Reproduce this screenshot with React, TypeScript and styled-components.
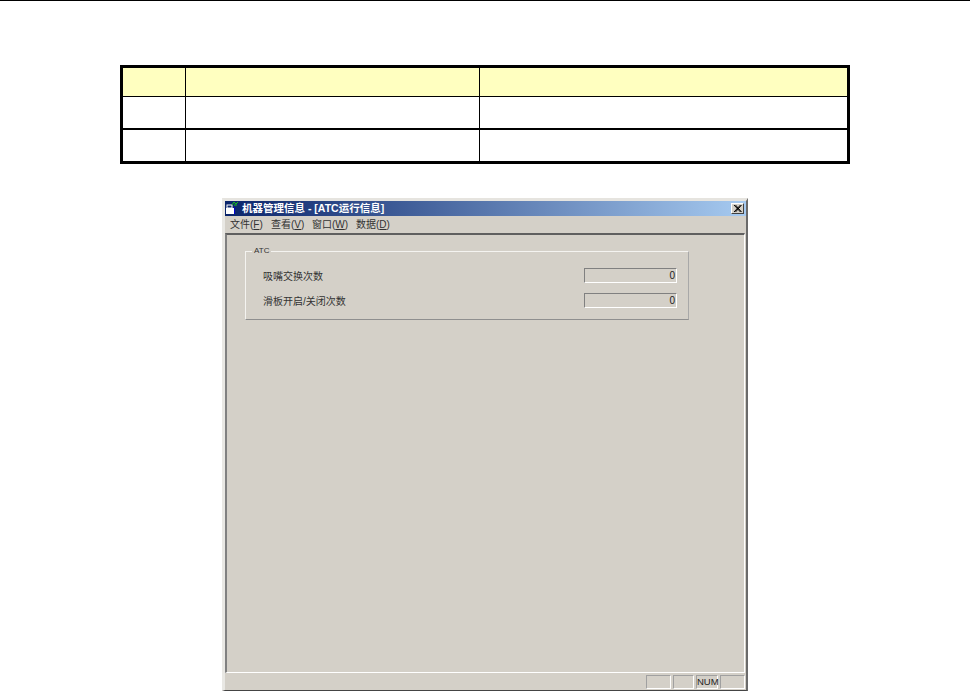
import React, { FunctionComponent } from "react";
import styled, { createGlobalStyle } from "styled-components";

const GlobalStyle = createGlobalStyle`
  html, body {
    margin: 0;
    padding: 0;
    background: #fff;
  }
  body {
    font-family: "Liberation Sans", "Noto Sans CJK SC", sans-serif;
  }
`;

const Page = styled.div`
  width: 970px;
  height: 691px;
  overflow: hidden;
  box-sizing: border-box;
  border-top: 1px solid #000;
`;
const SpecTable = styled.div`
  width: 730px;
  height: 99px;
  box-sizing: border-box;
  margin: 64px 0 0 120px;
  border: 3px solid #000;
  display: flex;
  flex-direction: column;
`;
const SpecRow = styled.div<{ $head?: boolean; $height: number; $thick?: boolean }>`
  display: grid;
  grid-template-columns: 62px 1px 293px 1px 1fr;
  height: ${(p) => p.$height}px;
  flex: none;
  box-sizing: border-box;
  background: ${(p) => (p.$head ? "#ffffc0" : "#fff")};
  border-bottom: ${(p) => (p.$thick ? "2px solid #000" : "0")};
`;
const SpecRule = styled.div`
  background: #000;
`;
const HeadRule = styled.div`
  height: 1px;
  background: #000;
  flex: none;
`;
const WindowWrap = styled.div`
  margin: 34px 0 0 222px;
  width: 526px;
  height: 493px;
  box-sizing: border-box;
  background: #d4d0c8;
  border-top: 3px solid #e6e4df;
  border-left: 3px solid #e9e8e4;
  border-right: 2px solid #6a6a6a;
  border-bottom: 1px solid #444;
  display: flex;
  flex-direction: column;
`;
const TitleBar = styled.div`
  height: 15px;
  flex: none;
  display: flex;
  align-items: center;
  background: linear-gradient(to right, #0a246a, #a6caf0);
  padding: 0 1px;
`;
const TitleText = styled.span`
  margin: -2px 0 0 3px;
  color: #fff;
  font-size: 10.5px;
  font-weight: bold;
  white-space: nowrap;
  flex: 1;
`;
const CloseButton = styled.div`
  width: 13px;
  height: 11px;
  box-sizing: border-box;
  margin-right: 1px;
  background: #d4d0c8;
  border: 1px solid;
  border-color: #fff #404040 #404040 #fff;
  display: flex;
  align-items: center;
  justify-content: center;
`;
const MenuBar = styled.div`
  height: 17px;
  flex: none;
  display: flex;
  align-items: center;
  padding-bottom: 2px;
  box-sizing: border-box;
  font-size: 10px;
  color: #333;
`;
const MenuItem = styled.span<{ $width: number }>`
  width: ${(p) => p.$width}px;
  flex: none;
  white-space: nowrap;
  u {
    text-decoration: underline;
  }
  &:first-child {
    margin-left: 5px;
  }
`;
const Client = styled.div`
  flex: 1;
  box-sizing: border-box;
  border-top: 2px solid #5f5f5f;
  border-left: 2px solid #808080;
  border-right: 1px solid #fff;
  border-bottom: 1px solid #fff;
  padding: 12px 0 0 18px;
  margin-right: 1px;
`;
const GroupBox = styled.fieldset`
  width: 444px;
  height: 73px;
  box-sizing: border-box;
  margin: 0;
  padding: 0 11px 0 17px;
  border: 1px solid;
  border-color: #f4f3f0 #a8a8a8 #8f8f8f #f4f3f0;
  display: block;
`;
const GroupLegend = styled.legend`
  margin-left: -11px;
  padding: 0 2px;
  font-size: 8px;
  line-height: 8px;
  color: #333;
`;
const FieldRow = styled.div`
  display: flex;
  align-items: center;
  justify-content: space-between;
  height: 15px;
  margin-top: 10px;
  &:first-of-type {
    margin-top: 13px;
  }
`;
const FieldLabel = styled.span`
  font-size: 10px;
  color: #333;
`;
const FieldValue = styled.div`
  width: 93px;
  height: 15px;
  box-sizing: border-box;
  border: 1px solid;
  border-color: #808080 #fff #fff #808080;
  font-size: 10px;
  line-height: 13px;
  text-align: right;
  padding-right: 1px;
  color: #222;
`;
const StatusBar = styled.div`
  height: 17px;
  flex: none;
  display: flex;
  align-items: center;
  justify-content: flex-end;
  gap: 2px;
  padding-right: 1px;
`;
const StatusPanel = styled.div<{ $width: number }>`
  width: ${(p) => p.$width}px;
  height: 14px;
  box-sizing: border-box;
  border: 1px solid;
  border-color: #a0a0a0 #fff #fff #a0a0a0;
  font-size: 9.5px;
  line-height: 12px;
  text-align: center;
  color: #222;
`;

const AppIcon: FunctionComponent = () => (
  <svg width="13" height="13" viewBox="0 0 13 13">
    <rect x="0" y="6" width="8" height="6" fill="#fff" />
    <rect x="1" y="3" width="5" height="3" fill="none" stroke="#fff" strokeWidth="1" />
    <rect x="8" y="5" width="1" height="7" fill="#0000d0" />
    <path d="M6 3 L8 0 L10 2 L12 0 M8 3 L11 3" stroke="#18c018" strokeWidth="1" fill="none" />
  </svg>
);

const CloseIcon: FunctionComponent = () => (
  <svg width="9" height="7" viewBox="0 0 9 7">
    <path d="M1 0 L7.5 7 M2.5 0 L8.5 7 M7.5 0 L1 7 M8.5 0 L2.5 7" stroke="#000" strokeWidth="1" fill="none" />
  </svg>
);

const App: FunctionComponent = () => {
  return (
    <Page>
      <GlobalStyle />
      <SpecTable>
        <SpecRow $head $height={28}>
          <div />
          <SpecRule />
          <div />
          <SpecRule />
          <div />
        </SpecRow>
        <HeadRule />
        <SpecRow $height={33} $thick>
          <div />
          <SpecRule />
          <div />
          <SpecRule />
          <div />
        </SpecRow>
        <SpecRow $height={31}>
          <div />
          <SpecRule />
          <div />
          <SpecRule />
          <div />
        </SpecRow>
      </SpecTable>
      <WindowWrap>
        <TitleBar>
          <AppIcon />
          <TitleText>机器管理信息 - [ATC运行信息]</TitleText>
          <CloseButton>
            <CloseIcon />
          </CloseButton>
        </TitleBar>
        <MenuBar>
          <MenuItem $width={41}>文件(<u>F</u>)</MenuItem>
          <MenuItem $width={41}>查看(<u>V</u>)</MenuItem>
          <MenuItem $width={44}>窗口(<u>W</u>)</MenuItem>
          <MenuItem $width={41}>数据(<u>D</u>)</MenuItem>
        </MenuBar>
        <Client>
          <GroupBox>
            <GroupLegend>ATC</GroupLegend>
            <FieldRow>
              <FieldLabel>吸嘴交换次数</FieldLabel>
              <FieldValue>0</FieldValue>
            </FieldRow>
            <FieldRow>
              <FieldLabel>滑板开启/关闭次数</FieldLabel>
              <FieldValue>0</FieldValue>
            </FieldRow>
          </GroupBox>
        </Client>
        <StatusBar>
          <StatusPanel $width={25} />
          <StatusPanel $width={21} />
          <StatusPanel $width={22}>NUM</StatusPanel>
          <StatusPanel $width={25} />
        </StatusBar>
      </WindowWrap>
    </Page>
  );
};

export default App;
